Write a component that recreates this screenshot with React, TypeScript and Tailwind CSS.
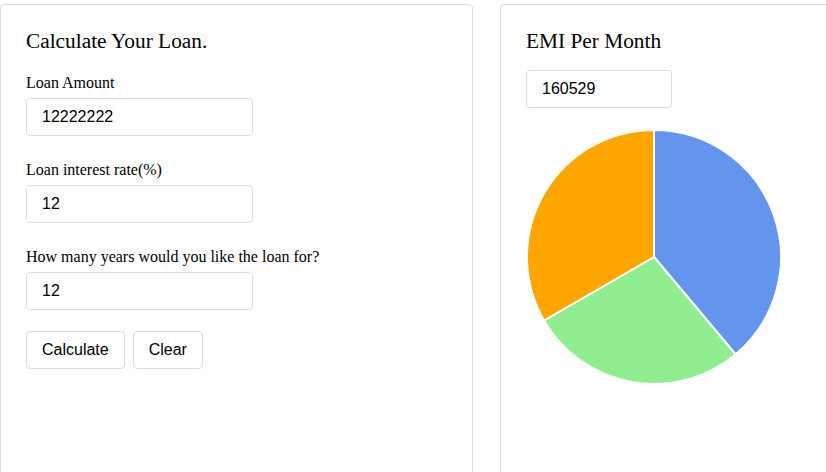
import React from "react";

const serif = { fontFamily: '"Liberation Serif", "Times New Roman", serif' };
const sans = { fontFamily: '"Liberation Sans", Arial, sans-serif' };

function polar(cx: number, cy: number, r: number, deg: number) {
  const a = ((deg - 90) * Math.PI) / 180;
  return [cx + r * Math.cos(a), cy + r * Math.sin(a)];
}

function slice(cx: number, cy: number, r: number, a0: number, a1: number) {
  const [x0, y0] = polar(cx, cy, r, a0);
  const [x1, y1] = polar(cx, cy, r, a1);
  const large = a1 - a0 > 180 ? 1 : 0;
  return `M ${cx} ${cy} L ${x0} ${y0} A ${r} ${r} 0 ${large} 1 ${x1} ${y1} Z`;
}

function Pie() {
  const cx = 128;
  const cy = 128;
  const r = 127;
  const slices = [
    { a0: 0, a1: 140, color: "#6495ED" },
    { a0: 140, a1: 240, color: "#90EE90" },
    { a0: 240, a1: 360, color: "#FFA500" },
  ];
  return (
    <svg width="256" height="256" viewBox="0 0 256 256" className="block">
      {slices.map((s, i) => (
        <path
          key={i}
          d={slice(cx, cy, r, s.a0, s.a1)}
          fill={s.color}
          stroke="#ffffff"
          strokeWidth={2}
          strokeLinejoin="round"
        />
      ))}
    </svg>
  );
}

function Field({ label, value, first }: { label: string; value: string; first?: boolean }) {
  return (
    <div className={first ? "mt-[21px]" : "mt-[25px]"}>
      <div className="text-[16px] leading-[18px] text-black mb-[6px]" style={serif}>
        {label}
      </div>
      <input
        readOnly
        value={value}
        className="block w-[227px] h-[38px] border border-[#dddddd] rounded-[4px] pl-[15px] pr-[10px] text-[16px] text-black bg-white outline-none"
        style={sans}
      />
    </div>
  );
}

export default function App() {
  return (
    <div className="w-[826px] h-[472px] overflow-hidden bg-white">
      <div className="flex pt-[4px]">
        <div className="w-[473px] h-[560px] shrink-0 border border-[#dddddd] rounded-[4px] pl-[25px] pt-[24px]">
          <h2 className="text-[21.33px] leading-[24px] text-black font-normal" style={serif}>
            Calculate Your Loan.
          </h2>
          <Field label="Loan Amount" value="12222222" first />
          <Field label="Loan interest rate(%)" value="12" />
          <Field label="How many years would you like the loan for?" value="12" />
          <div className="flex gap-[8px] mt-[21px]">
            <button
              className="h-[38px] px-[15px] border border-[#dddddd] rounded-[4px] bg-white text-[16px] text-black"
              style={sans}
            >
              Calculate
            </button>
            <button
              className="h-[38px] px-[15px] border border-[#dddddd] rounded-[4px] bg-white text-[16px] text-black"
              style={sans}
            >
              Clear
            </button>
          </div>
        </div>
        <div className="w-[473px] h-[560px] shrink-0 ml-[27px] border border-[#dddddd] rounded-[4px] pl-[25px] pt-[24px]">
          <h2 className="text-[21.33px] leading-[24px] text-black font-normal" style={serif}>
            EMI Per Month
          </h2>
          <input
            readOnly
            value="160529"
            className="block mt-[17px] w-[146px] h-[38px] border border-[#dddddd] rounded-[4px] pl-[15px] text-[16px] text-black bg-white outline-none"
            style={sans}
          />
          <div className="mt-[21px]">
            <Pie />
          </div>
        </div>
      </div>
    </div>
  );
}
